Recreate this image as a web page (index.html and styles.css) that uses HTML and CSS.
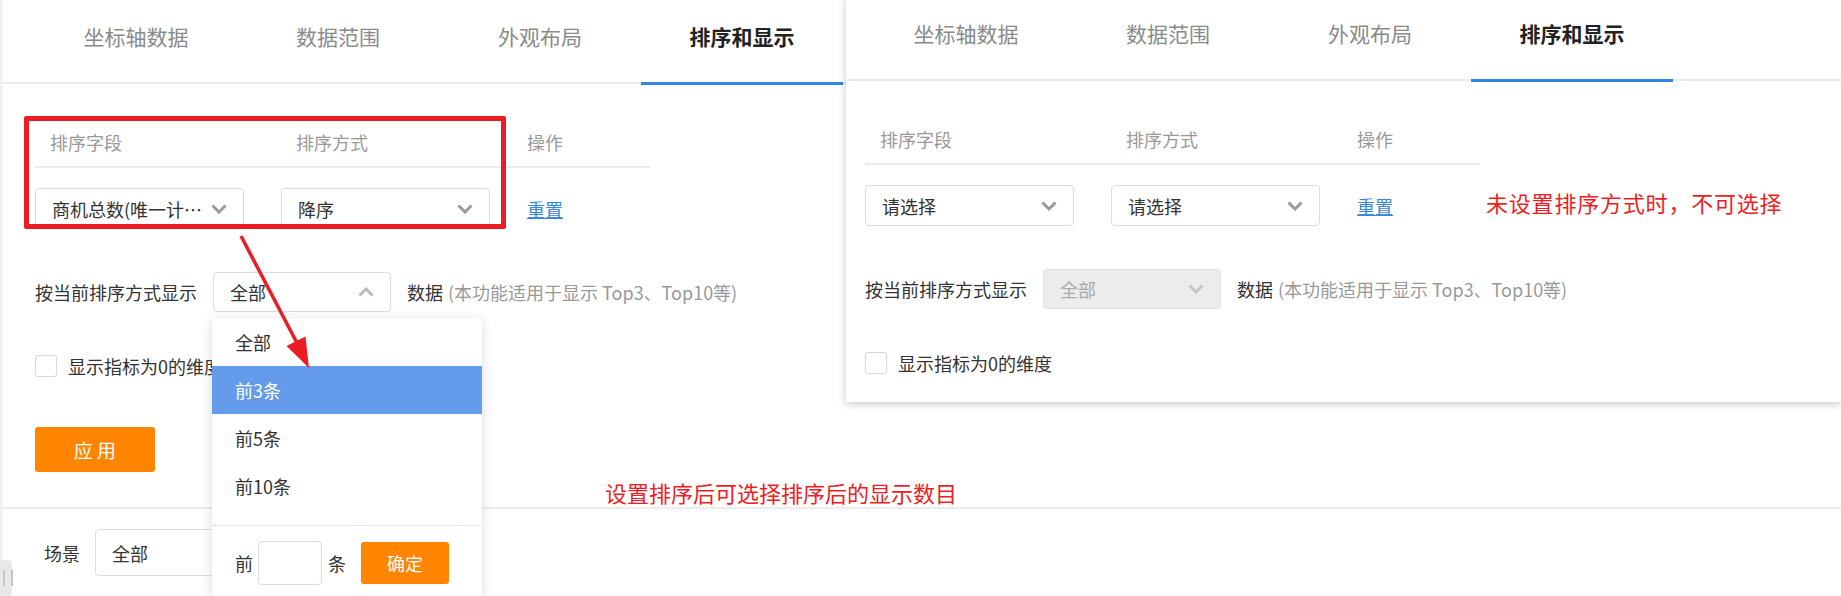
FILE: index.html
```html
<!DOCTYPE html>
<html lang="zh-CN">
<head>
  <meta charset="UTF-8">
  <title>排序和显示</title>
  <link rel="stylesheet" href="styles.css">
</head>
<body>
  <div class="page">
    <div class="top-section">
      <div class="tabs">
        <div class="tab">坐标轴数据</div>
        <div class="tab">数据范围</div>
        <div class="tab">外观布局</div>
        <div class="tab active">排序和显示</div>
      </div>

      <div class="panel-body">
        <div class="sort-table">
          <div class="sort-head">
            <div class="col col-field">排序字段</div>
            <div class="col col-order">排序方式</div>
            <div class="col col-action">操作</div>
          </div>
          <div class="sort-row">
            <div class="col col-field">
              <div class="select"><span class="select-text">商机总数(唯一计…</span><svg class="chevron" viewBox="0 0 16 10"><path d="M1.5 1.5 L8 8 L14.5 1.5"/></svg></div>
            </div>
            <div class="col col-order">
              <div class="select"><span class="select-text">降序</span><svg class="chevron" viewBox="0 0 16 10"><path d="M1.5 1.5 L8 8 L14.5 1.5"/></svg></div>
            </div>
            <div class="col col-action"><a class="reset">重置</a></div>
          </div>
        </div>

        <div class="limit-row">
          <span>按当前排序方式显示</span>
          <div class="select open"><span class="select-text">全部</span><svg class="chevron" viewBox="0 0 16 10"><path d="M1.5 8.5 L8 2 L14.5 8.5"/></svg></div>
          <span>数据</span>
          <span class="hint">(本功能适用于显示 Top3、Top10等)</span>
        </div>

        <div class="check-row"><span class="checkbox"></span>显示指标为0的维度</div>

        <button class="apply-btn">应 用</button>
      </div>
    </div>

    <div class="scene-row">
      <span>场景</span>
      <div class="select"><span class="select-text">全部</span></div>
    </div>

    <!-- open dropdown of the limit select -->
    <div class="dropdown">
      <div class="dropdown-list">
        <div class="dropdown-item">全部</div>
        <div class="dropdown-item selected">前3条</div>
        <div class="dropdown-item">前5条</div>
        <div class="dropdown-item">前10条</div>
      </div>
      <div class="dropdown-footer">
        <span>前</span>
        <span class="count-input"></span>
        <span>条</span>
        <button class="confirm-btn">确定</button>
      </div>
    </div>

    <!-- annotations -->
    <div class="highlight-box"></div>
    <svg class="arrow" viewBox="0 0 520 400">
      <line x1="241" y1="236" x2="297" y2="343" stroke="#ec1c24" stroke-width="3.5"/>
      <polygon points="309,368 286.5,346 305.5,336.5" fill="#ec1c24"/>
    </svg>
    <div class="note note-bottom">设置排序后可选择排序后的显示数目</div>
    <div class="handle"></div>
  </div>

  <div class="preview">
    <div class="tabs">
      <div class="tab">坐标轴数据</div>
      <div class="tab">数据范围</div>
      <div class="tab">外观布局</div>
      <div class="tab active">排序和显示</div>
    </div>

    <div class="panel-body">
      <div class="sort-table">
        <div class="sort-head">
          <div class="col col-field">排序字段</div>
          <div class="col col-order">排序方式</div>
          <div class="col col-action">操作</div>
        </div>
        <div class="sort-row">
          <div class="col col-field">
            <div class="select"><span class="select-text">请选择</span><svg class="chevron" viewBox="0 0 16 10"><path d="M1.5 1.5 L8 8 L14.5 1.5"/></svg></div>
          </div>
          <div class="col col-order">
            <div class="select"><span class="select-text">请选择</span><svg class="chevron" viewBox="0 0 16 10"><path d="M1.5 1.5 L8 8 L14.5 1.5"/></svg></div>
          </div>
          <div class="col col-action"><a class="reset">重置</a></div>
          <div class="note note-side">未设置排序方式时，不可选择</div>
        </div>
      </div>

      <div class="limit-row">
        <span>按当前排序方式显示</span>
        <div class="select disabled"><span class="select-text">全部</span><svg class="chevron" viewBox="0 0 16 10"><path d="M1.5 1.5 L8 8 L14.5 1.5"/></svg></div>
        <span>数据</span>
        <span class="hint">(本功能适用于显示 Top3、Top10等)</span>
      </div>

      <div class="check-row"><span class="checkbox"></span>显示指标为0的维度</div>
    </div>
  </div>
</body>
</html>
```

FILE: styles.css
```css
:root {
  --orange: #ff8400;
  --blue: #3086e4;
  --red: #ec1c24;
  --line: #ececec;
  --border: #dcdcdc;
}

* {
  box-sizing: border-box;
}

body {
  margin: 0;
  width: 1841px;
  height: 596px;
  overflow: hidden;
  position: relative;
  background: #fff;
  color: #333;
  font-family: "Noto Sans CJK SC", "Microsoft YaHei", sans-serif;
  font-size: 18px;
}

.page {
  position: relative;
  height: 596px;
  box-shadow: inset 4px 0 4px -3px rgba(0, 0, 0, 0.12);
}

.top-section {
  border-bottom: 2px solid var(--line);
  padding-bottom: 35px;
}

/* tabs */
.tabs {
  display: flex;
  padding-left: 35px;
  border-bottom: 2px solid var(--line);
}

.tab {
  position: relative;
  width: 202px;
  height: 82px;
  padding-top: 22px;
  line-height: 28px;
  text-align: center;
  font-size: 21px;
  color: #8a8a8a;
}

.tab.active {
  color: #222;
  font-weight: bold;
}

.tab.active::after {
  content: "";
  position: absolute;
  left: 0;
  right: 0;
  bottom: -3px;
  height: 3px;
  background: var(--blue);
}

.panel-body {
  padding: 0 35px;
}

/* sort table */
.sort-table {
  width: 615px;
  margin-top: 34px;
}

.sort-head {
  display: flex;
  height: 50px;
  line-height: 48px;
  border-bottom: 2px solid var(--line);
  color: #999;
}

.sort-head .col-field,
.sort-head .col-order {
  padding-left: 15px;
}

.sort-row {
  display: flex;
  align-items: center;
  padding-top: 20px;
}

.col-field,
.col-order {
  width: 246px;
  flex-shrink: 0;
}

.col-action {
  width: 123px;
  flex-shrink: 0;
}

.sort-row .select {
  width: 209px;
}

.select {
  display: flex;
  align-items: center;
  justify-content: space-between;
  height: 41px;
  padding: 0 16px;
  background: #fff;
  border: 1px solid var(--border);
  border-radius: 4px;
}

.select-text {
  white-space: nowrap;
}

.chevron {
  width: 16px;
  height: 10px;
  flex-shrink: 0;
  margin-left: 4px;
  fill: none;
  stroke: #9a9a9a;
  stroke-width: 3;
}

.select.open .chevron {
  stroke: #b9bdc3;
}

.select.disabled {
  background: #ececec;
  border-color: #dedede;
  color: #aaa;
}

.select.disabled .chevron {
  stroke: #c4c4c4;
}

.reset {
  color: #3a86da;
  text-decoration: underline;
  cursor: pointer;
}

/* limit row */
.limit-row {
  display: flex;
  align-items: center;
  height: 40px;
  margin-top: 43px;
}

.limit-row .select {
  width: 178px;
  height: 40px;
  margin: 0 16px;
}

.hint {
  color: #999;
  margin-left: 5px;
}

.check-row {
  display: flex;
  align-items: center;
  height: 22px;
  margin-top: 43px;
}

.checkbox {
  width: 22px;
  height: 22px;
  margin-right: 11px;
  border: 1px solid #d9d9d9;
  border-radius: 3px;
  background: #fff;
}

.apply-btn {
  display: block;
  width: 120px;
  height: 45px;
  margin-top: 50px;
  border: none;
  border-radius: 3px;
  background: var(--orange);
  color: #fff;
  font-family: inherit;
  font-size: 19px;
}

/* scene row */
.scene-row {
  display: flex;
  align-items: center;
  padding: 20px 0 0 44px;
}

.scene-row .select {
  width: 200px;
  height: 47px;
  margin-left: 15px;
}

/* dropdown */
.dropdown {
  position: absolute;
  left: 212px;
  top: 318px;
  width: 270px;
  background: #fff;
  border-radius: 4px;
  box-shadow: 0 2px 12px rgba(0, 0, 0, 0.14);
}

.dropdown-list {
  padding-bottom: 15px;
  border-bottom: 1px solid #e4e4e4;
}

.dropdown-item {
  height: 48px;
  line-height: 48px;
  padding-left: 23px;
}

.dropdown-item.selected {
  background: #649bea;
  color: #fff;
}

.dropdown-footer {
  display: flex;
  align-items: center;
  padding: 15px 0 12px 23px;
}

.count-input {
  width: 64px;
  height: 44px;
  margin: 0 6px 0 5px;
  border: 1px solid var(--border);
  border-radius: 4px;
}

.confirm-btn {
  width: 88px;
  height: 42px;
  margin-left: 15px;
  border: none;
  border-radius: 3px;
  background: var(--orange);
  color: #fff;
  font-family: inherit;
  font-size: 18px;
}

/* annotations */
.highlight-box {
  position: absolute;
  left: 24px;
  top: 116px;
  width: 482px;
  height: 113px;
  border: 5px solid var(--red);
  border-radius: 2px;
}

.arrow {
  position: absolute;
  left: 0;
  top: 0;
  width: 520px;
  height: 400px;
  pointer-events: none;
}

.note {
  color: #ee1d23;
  font-size: 22px;
  line-height: 32px;
  white-space: nowrap;
}

.note-bottom {
  position: absolute;
  left: 605px;
  top: 476px;
}

.note-side {
  margin: 0 0 7px 6px;
  letter-spacing: 0.8px;
}

.handle {
  position: absolute;
  left: 0;
  top: 560px;
  width: 12px;
  height: 36px;
  background: #e8e8e8;
  border-radius: 0 4px 4px 0;
}

.handle::before {
  content: "";
  position: absolute;
  left: 3px;
  top: 10px;
  width: 6px;
  height: 16px;
  border-left: 2px solid #c6c6c6;
  border-right: 2px solid #c6c6c6;
}

/* second screenshot: state without sort order */
.preview {
  position: absolute;
  left: 846px;
  top: -3px;
  width: 995px;
  height: 405px;
  background: #fff;
  box-shadow: 0 2px 8px rgba(0, 0, 0, 0.22);
}

.preview .tabs {
  padding-left: 19px;
}

.preview .panel-body {
  padding: 0 19px;
}
```
